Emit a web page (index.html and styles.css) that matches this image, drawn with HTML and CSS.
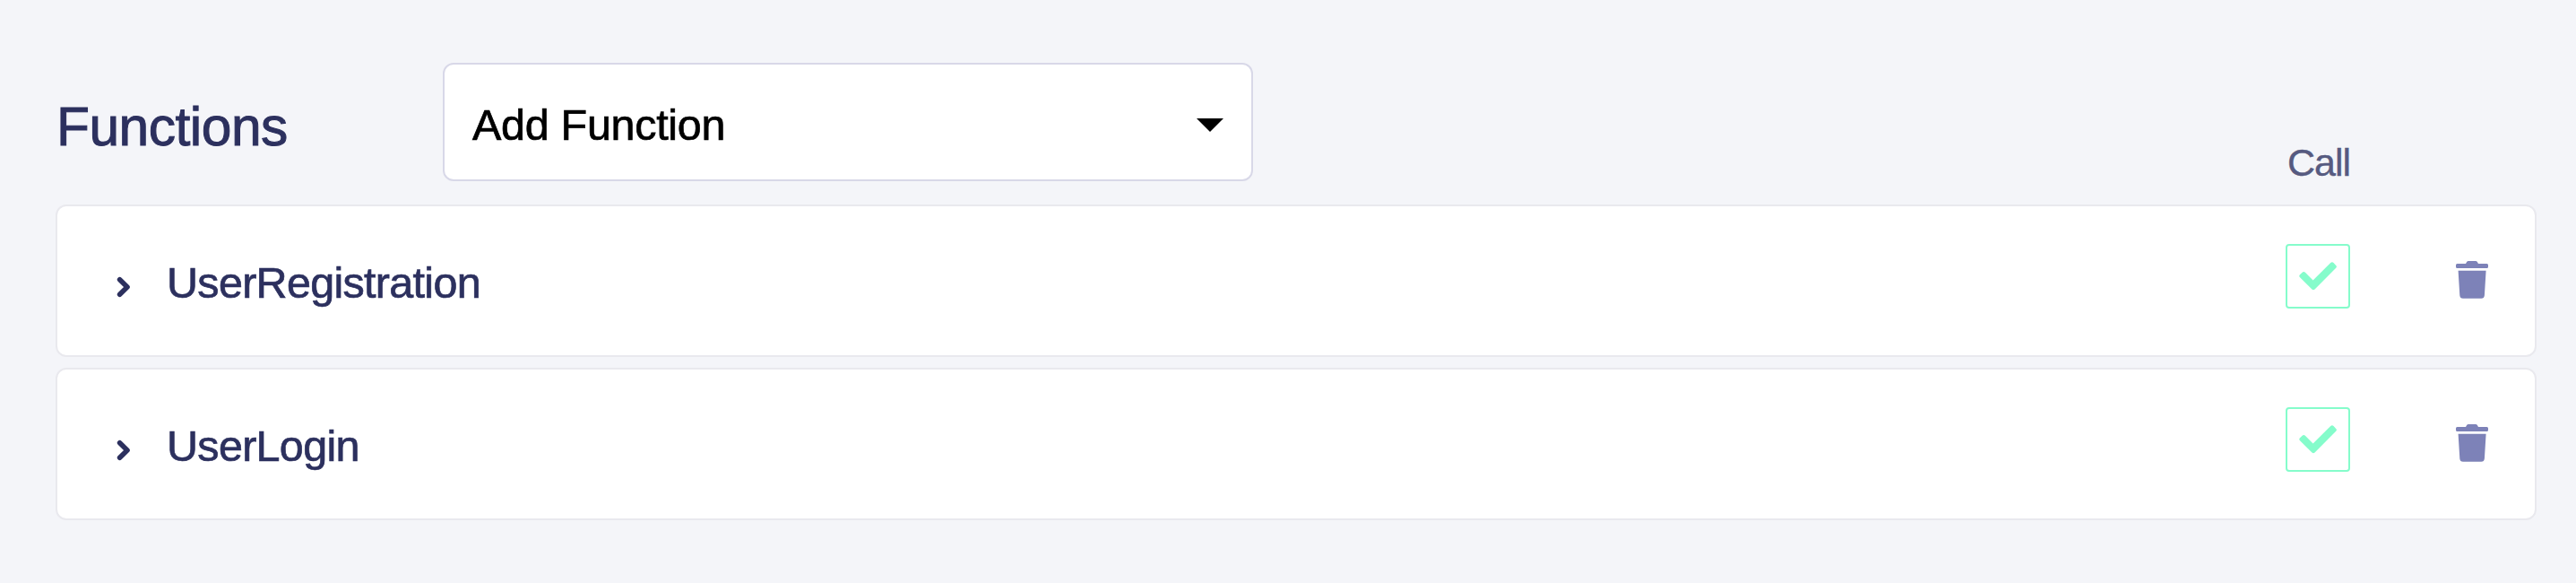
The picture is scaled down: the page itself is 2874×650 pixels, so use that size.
FILE: index.html
```html
<!DOCTYPE html>
<html lang="en">
<head>
<meta charset="utf-8">
<title>Functions</title>
<link rel="stylesheet" href="styles.css">
</head>
<body>
<svg class="sprite" aria-hidden="true">
  <symbol id="chevron" viewBox="0 0 16 24"><path d="M3.600 3.700L12 12L3.600 20.300" fill="none" stroke="currentColor" stroke-width="5.600" stroke-linecap="round" stroke-linejoin="round"/></symbol>
  <symbol id="check" viewBox="0 0 42 32"><path d="M1 14.300L3.600 11.700Q5.200 10.200 6.900 11.700L15.600 20.500L35.200 1Q36.900 -.5 38.500 1L41 3.700Q42.700 5.300 41.200 6.800L17.600 30.500Q16 32 14.400 30.500L1 17.300Q-.5 15.800 1 14.300Z" fill="currentColor"/></symbol>
  <symbol id="trash" viewBox="0 0 36 42"><path d="M1.500 3H11L12 1.200Q12.700 0 14 0H22Q23.300 0 24 1.200L25 3H34.500Q36 3 36 4.500V6.500Q36 8 34.500 8H1.500Q0 8 0 6.500V4.500Q0 3 1.500 3ZM2.600 10.800H33.600L31.900 38.200Q31.600 41.700 28.200 41.700H8Q4.600 41.700 4.300 38.200Z" fill="currentColor"/></symbol>
</svg>
<main class="panel">
  <header class="toolbar">
    <h1 class="title">Functions</h1>
    <div class="select" role="button" tabindex="0">
      <span class="select-label">Add Function</span>
      <span class="caret"></span>
    </div>
    <span class="column-label">Call</span>
  </header>
  <ul class="list">
    <li class="row">
      <svg class="chevron"><use href="#chevron"/></svg>
      <span class="name">UserRegistration</span>
      <span class="checkbox"><svg class="check"><use href="#check"/></svg></span>
      <svg class="trash"><use href="#trash"/></svg>
    </li>
    <li class="row">
      <svg class="chevron"><use href="#chevron"/></svg>
      <span class="name">UserLogin</span>
      <span class="checkbox"><svg class="check"><use href="#check"/></svg></span>
      <svg class="trash"><use href="#trash"/></svg>
    </li>
  </ul>
</main>
</body>
</html>
```

FILE: styles.css
```css
* { box-sizing: border-box; }
body {
  margin: 0;
  background: #f4f5f9;
  color: #2c305e;
  font-family: "Liberation Sans", Arial, sans-serif;
}
svg { display: block; flex: none; }
.sprite { display: none; }
.panel {
  min-height: 650px;
  padding: 70px 44px 70px 62px;
}
.toolbar {
  display: flex;
  height: 132px;
  margin-bottom: 26px;
}
.title {
  width: 432px;
  margin: 0;
  padding-left: 1px;
  font-size: 60.5px;
  font-weight: 400;
  line-height: 142px;
  letter-spacing: -0.5px;
  -webkit-text-stroke: 1px currentColor;
}
.select {
  display: flex;
  align-items: center;
  justify-content: space-between;
  width: 904px;
  padding: 0 31px;
  border: 2px solid #d8d8e8;
  border-radius: 12px;
  background: #fff;
  color: #000;
}
.select-label {
  padding-top: 6px;
  font-size: 48.5px;
  line-height: 60px;
  letter-spacing: -0.3px;
  -webkit-text-stroke: 0.7px currentColor;
}
.caret {
  margin-top: 7px;
  border: 15px solid transparent;
  border-top-color: #000;
  border-bottom-width: 0;
}
.column-label {
  margin-left: auto;
  margin-right: 208px;
  padding-top: 86px;
  color: #565a80;
  font-size: 43px;
  line-height: 50px;
  letter-spacing: -1px;
  -webkit-text-stroke: 0.4px currentColor;
}
.list {
  display: flex;
  flex-direction: column;
  gap: 12px;
  margin: 0;
  padding: 0;
  list-style: none;
}
.row {
  display: flex;
  height: 170px;
  padding: 0 52px 0 66px;
  border: 2px solid #e9e9ee;
  border-radius: 12px;
  background: #fff;
}
.chevron { width: 16px; height: 24px; margin-top: 78px; }
.name {
  margin: 55px auto 0 40px;
  font-size: 48.5px;
  line-height: 61px;
  letter-spacing: -0.7px;
  -webkit-text-stroke: 0.7px currentColor;
}
.checkbox {
  display: flex;
  align-items: center;
  justify-content: center;
  width: 72px;
  height: 72px;
  margin: 42px 118px 0 0;
  border: 2px solid #85fccb;
  border-radius: 4px;
  color: #85fccb;
}
.check { width: 42px; height: 32px; }
.trash { width: 36px; height: 42px; margin-top: 61px; color: #7d82b8; }
```
